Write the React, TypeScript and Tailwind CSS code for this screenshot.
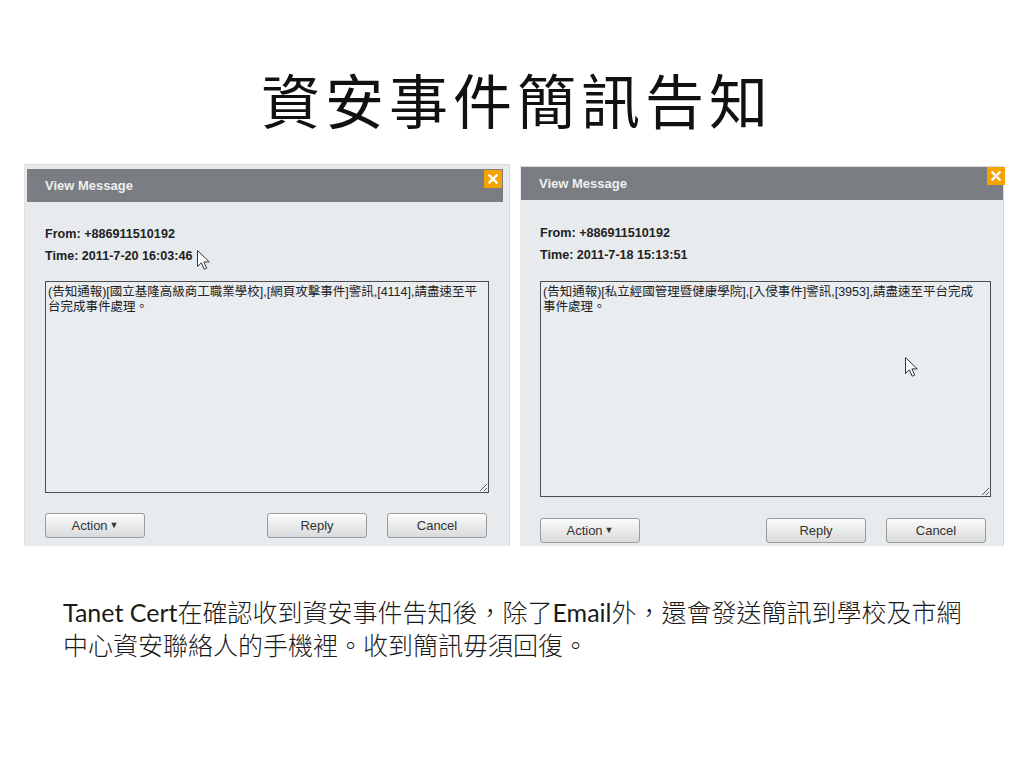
import React from "react";

const cjk = { fontFamily: '"Liberation Sans", "Noto Sans CJK TC", sans-serif' };

type PanelProps = {
  width: string;
  time: string;
  message: string;
  headerClass: string;
  closeClass: string;
  fromMt: string;
  areaClass: string;
  btnMt: string;
  gapReply: string;
  pb: string;
  cursor: string;
};

function Cursor({ className }: { className: string }) {
  return (
    <svg className={className} width="14" height="21" viewBox="0 0 14 21">
      <path d="M0.5 0.5 L0.5 16.5 L4.4 12.8 L7.2 19.2 L9.7 18.1 L6.9 11.9 L12.2 11.9 Z" fill="#fff" stroke="#333" strokeWidth="1" />
    </svg>
  );
}

function Btn({ label, w, arrow }: { label: string; w: string; arrow?: boolean }) {
  return (
    <div
      className={`${w} h-[25px] flex items-center justify-center rounded-[3px] border border-[#9b9b9b] bg-gradient-to-b from-[#fbfbfb] to-[#d9dadb] text-[13px] text-[#333]`}
    >
      {label}
      {arrow && <span className="ml-[2px] text-[9px] leading-none">▼</span>}
    </div>
  );
}

function Panel(p: PanelProps) {
  return (
    <div className={`relative ${p.width} border-t border-r border-[#d8dbde] bg-[#e8ebee] ${p.pb}`} style={cjk}>
      <div className={`relative h-[33px] bg-[#7a7e82] flex items-center pl-[18px] ${p.headerClass}`}>
        <span className="text-[13px] font-bold text-[#eef0f2]">View Message</span>
        <div className={`absolute w-[18px] h-[18px] bg-[#f5a300] flex items-center justify-center ${p.closeClass}`}>
          <svg width="10" height="10" viewBox="0 0 10 10">
            <path d="M1.5 1.5 L8.5 8.5 M8.5 1.5 L1.5 8.5" stroke="#fff" strokeWidth="2.4" strokeLinecap="square" />
          </svg>
        </div>
      </div>
      <div className="pl-[20px]">
        <div className={`${p.fromMt} text-[12.6px] font-bold text-[#222] leading-[22px]`}>
          <div>From: +886911510192</div>
          <div>Time: {p.time}</div>
        </div>
        <textarea
          readOnly
          defaultValue={p.message}
          className={`block border border-[#4d4d4d] bg-[#eaedf0] px-[2px] py-[3px] text-[12.5px] leading-[15px] text-[#222] whitespace-pre resize overflow-hidden outline-none ${p.areaClass}`}
          style={cjk}
        />
        <div className={`flex ${p.btnMt}`}>
          <Btn label="Action" w="w-[100px]" arrow />
          <div className={p.gapReply} />
          <Btn label="Reply" w="w-[100px]" />
          <div className="w-[20px]" />
          <Btn label="Cancel" w="w-[100px]" />
        </div>
      </div>
      <Cursor className={`absolute ${p.cursor}`} />
    </div>
  );
}

export default function App() {
  return (
    <div className="w-[1024px] h-[768px] bg-white overflow-hidden">
      <h1
        className="pt-[66px] pl-[10px] text-center text-[59px] leading-[66px] tracking-[5px] text-[#111] font-normal"
        style={{ fontFamily: '"Noto Sans CJK TC", sans-serif' }}
      >
        資安事件簡訊告知
      </h1>

      <div className="flex items-start pl-[24px] mt-[32px] gap-[10px]">
        <div className="border-l border-[#dfe2e5]">
          <Panel
            width="w-[485px]"
            time="2011-7-20 16:03:46"
            message={"(告知通報)[國立基隆高級商工職業學校],[網頁攻擊事件]警訊,[4114],請盡速至平\n台完成事件處理。"}
            headerClass="mt-[4px] ml-[2px] w-[476px]"
            closeClass="top-[1px] right-[1px]"
            fromMt="mt-[21px]"
            areaClass="mt-[14px] w-[444px] h-[212px]"
            btnMt="mt-[20px]"
            gapReply="w-[122px]"
            pb="pb-[8px]"
            cursor="left-[172px] top-[85px]"
          />
        </div>
        <div className="mt-[2px]">
          <Panel
            width="w-[484px]"
            time="2011-7-18 15:13:51"
            message={"(告知通報)[私立經國管理暨健康學院],[入侵事件]警訊,[3953],請盡速至平台完成\n事件處理。"}
            headerClass="ml-[1px] w-[482px]"
            closeClass="top-0 right-[-2px]"
            fromMt="mt-[22px]"
            areaClass="mt-[15px] w-[451px] h-[216px]"
            btnMt="mt-[21px]"
            gapReply="w-[126px]"
            pb="pb-[3px]"
            cursor="left-[385px] top-[190px]"
          />
        </div>
      </div>

      <p
        className="mt-[50px] pl-[63px] text-[25px] leading-[33px] text-[#1a1a1a] font-light"
        style={{ fontFamily: 'Lato, "Noto Sans CJK TC", sans-serif' }}
      >
        <span className="font-normal">Tanet Cert</span>在確認收到資安事件告知後，除了<span className="font-normal">Email</span>外，還會發送簡訊到學校及市網
        <br />
        中心資安聯絡人的手機裡。收到簡訊毋須回復。
      </p>
    </div>
  );
}
